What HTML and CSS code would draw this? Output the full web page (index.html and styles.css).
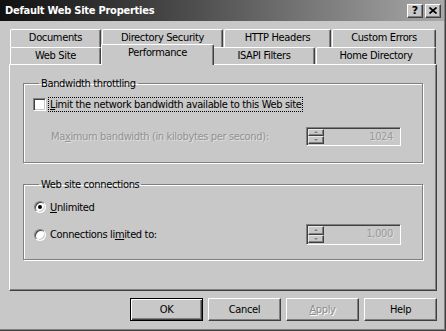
FILE: index.html
```html
<!DOCTYPE html>
<html>
<head>
<meta charset="utf-8">
<link rel="stylesheet" href="styles.css">
</head>
<body>
<div class="window">
  <div class="titlebar">
    <span class="title">Default Web Site Properties</span>
    <div class="tbtns">
      <span class="tbtn help">?</span>
      <span class="tbtn close"><svg width="8" height="7" viewBox="0 0 8 7"><path d="M0.5 0.5 L7.5 6.5 M7.5 0.5 L0.5 6.5" stroke="#000" stroke-width="1.7" fill="none"/></svg></span>
    </div>
  </div>
  <div class="main">
    <div class="tabs">
      <div class="tabrow back">
        <div class="tab t-doc">Documents</div>
        <div class="tab t-dir">Directory Security</div>
        <div class="tab t-http">HTTP Headers</div>
        <div class="tab t-err">Custom Errors</div>
      </div>
      <div class="tabrow front">
        <div class="tab t-web">Web Site</div>
        <div class="tab t-perf active">Performance</div>
        <div class="tab t-isapi">ISAPI Filters</div>
        <div class="tab t-home">Home Directory</div>
      </div>
    </div>
    <div class="panel">
      <fieldset class="group g1">
        <legend>Bandwidth throttling</legend>
        <div class="row check-row">
          <span class="check"></span>
          <span class="focus"><u>L</u>imit the network bandwidth available to this Web site</span>
        </div>
        <div class="row spin-row">
          <span class="dis label-max">Ma<u>x</u>imum bandwidth (in kilobytes per second):</span>
          <div class="spin">
            <div class="ud"><span class="udb"><i class="ar up"></i></span><span class="udb"><i class="ar down"></i></span></div>
            <span class="val">1024</span>
          </div>
        </div>
      </fieldset>
      <fieldset class="group g2">
        <legend>Web site connections</legend>
        <div class="row radio-row r1">
          <span class="radio on"></span>
          <span class="rlabel"><u>U</u>nlimited</span>
        </div>
        <div class="row radio-row r2">
          <span class="radio"></span>
          <span class="rlabel">Connections li<u>m</u>ited to:</span>
          <div class="spin tall">
            <div class="ud"><span class="udb"><i class="ar up"></i></span><span class="udb"><i class="ar down"></i></span></div>
            <span class="val">1,000</span>
          </div>
        </div>
      </fieldset>
    </div>
    <div class="buttons">
      <span class="btn default">OK</span>
      <span class="btn">Cancel</span>
      <span class="btn disabled"><u>A</u>pply</span>
      <span class="btn">Help</span>
    </div>
  </div>
</div>
</body>
</html>
```
FILE: styles.css
```css
* { box-sizing: border-box; }
html, body { margin: 0; padding: 0; }
body {
  background: #c8c8c8;
  font-family: "DejaVu Sans Condensed", "Liberation Sans", sans-serif;
  font-size: 11px;
  letter-spacing: -0.35px;
  color: #000;
  width: 446px;
  height: 331px;
  overflow: hidden;
}
u { text-decoration: underline; text-underline-offset: 1px; }

.window {
  width: 446px;
  height: 331px;
  background: #c8c8c8;
  border-right: 1px solid #404040;
  border-bottom: 1px solid #404040;
  box-shadow: inset -1px -1px 0 #808080;
  display: flex;
  flex-direction: column;
}

.titlebar {
  height: 21px;
  margin-right: 1px;
  background: linear-gradient(to right, #101010 0%, #505050 45%, #a8a8a8 100%);
  display: flex;
  align-items: center;
  padding: 0 3px 0 5px;
  color: #fff;
  font-weight: bold;
}
.title { font-size: 11px; letter-spacing: -0.25px; }
.tbtns { margin-left: auto; display: flex; gap: 2px; }
.tbtn {
  width: 16px;
  height: 14px;
  background: #c8c8c8;
  border: 1px solid;
  border-color: #fff #404040 #404040 #fff;
  box-shadow: inset -1px -1px 0 #808080;
  display: flex;
  align-items: center;
  justify-content: center;
  color: #000;
  font-family: "DejaVu Sans", sans-serif;
  font-weight: bold;
  font-size: 11px;
  line-height: 12px;
  letter-spacing: 0;
}

.main { padding: 8px 0 0 9px; width: 437px; }

.tabs { margin: 0 1px; width: 426px; }
.tabrow { display: flex; gap: 1px; }
.tabrow.back { height: 18px; }
.tabrow.front { height: 17px; }
.tab {
  background: #c8c8c8;
  border-top: 1px solid #fff;
  border-left: 1px solid #fff;
  border-right: 1px solid #404040;
  box-shadow: inset -1px 0 0 #808080;
  border-radius: 2px 2px 0 0;
  text-align: center;
  line-height: 16px;
  white-space: nowrap;
}
.back .tab { height: 18px; }
.front .tab { height: 17px; }
.t-doc { width: 91px; }
.t-dir { width: 121px; }
.t-http { width: 107px; }
.t-err { width: 104px; }
.t-web { width: 91px; }
.t-perf { width: 110px; }
.t-isapi { width: 102px; }
.t-home { width: 120px; }
.front .tab.active {
  position: relative;
  z-index: 1;
  height: 21px;
  margin: -3px -2px 0 -1px;
  width: 113px;
}

.panel {
  width: 428px;
  height: 227px;
  border-top: 1px solid #fff;
  border-left: 1px solid #fff;
  border-right: 1px solid #404040;
  border-bottom: 1px solid #404040;
  box-shadow: inset -1px -1px 0 #808080;
  padding: 12px 13px 0 13px;
}

.group {
  margin: 0;
  padding: 0 0 0 9px;
  border: 1px solid #808080;
  box-shadow: 1px 1px 0 #fff, inset 1px 1px 0 #fff;
  min-width: 0;
  width: 400px;
}
.group legend {
  margin-left: 6px;
  padding: 0 2px;
  line-height: 13px;
  height: 13px;
}
.g1 { height: 86px; }
.g2 { height: 82px; margin-top: 15px; }

.row { display: flex; align-items: center; }
.check-row { margin-top: 6px; height: 16px; }
.check {
  width: 13px;
  height: 13px;
  background: #fff;
  border: 1px solid;
  border-color: #808080 #fff #fff #808080;
  box-shadow: inset 1px 1px 0 #404040, inset -1px -1px 0 #c8c8c8;
  flex: none;
}
.focus {
  margin-left: 2px;
  border: 1px dotted #000;
  padding: 0 1px;
  line-height: 13px;
  white-space: nowrap;
}

.spin-row { margin-top: 14px; height: 20px; }
.dis { color: #929292; text-shadow: 1px 1px 0 rgba(255,255,255,0.45); }
.label-max { margin-left: 18px; white-space: nowrap; }

.spin {
  margin-left: auto;
  margin-right: 21px;
  width: 95px;
  height: 19px;
  border: 1px solid;
  border-color: #808080 #fff #fff #808080;
  box-shadow: inset 1px 1px 0 #404040, inset -1px -1px 0 #c8c8c8;
  padding: 1px;
  display: flex;
  flex: none;
}
.spin.tall { height: 21px; }
.ud { width: 16px; display: flex; flex-direction: column; }
.udb {
  flex: 1;
  border: 1px solid;
  border-color: #e8e8e8 #404040 #404040 #e8e8e8;
  box-shadow: inset -1px -1px 0 #808080;
  background: #c8c8c8;
  display: flex;
  align-items: center;
  justify-content: center;
}
.ar { display: block; width: 0; height: 0; border-left: 2px solid transparent; border-right: 2px solid transparent; }
.ar.up { border-bottom: 2px solid #808080; }
.ar.down { border-top: 2px solid #808080; }
.val {
  flex: 1;
  text-align: right;
  padding-right: 6px;
  line-height: 15px;
  color: #9a9a9a;
  text-shadow: 1px 1px 0 rgba(255,255,255,0.4);
}

.radio-row.r1 { margin-top: 8px; height: 16px; }
.radio-row.r2 { margin-top: 9px; height: 21px; }
.radio {
  margin-left: 1px;
  width: 12px;
  height: 12px;
  border-radius: 50%;
  background: #fff;
  border: 1px solid;
  border-color: #808080 #fff #fff #808080;
  box-shadow: inset 1px 1px 0 #404040, inset -1px -1px 0 #c8c8c8;
  display: flex;
  align-items: center;
  justify-content: center;
  flex: none;
}
.radio.on::after {
  content: "";
  width: 4px;
  height: 4px;
  border-radius: 50%;
  background: #000;
}
.rlabel { margin-left: 4px; white-space: nowrap; }

.buttons {
  width: 428px;
  margin-top: 7px;
  display: flex;
  justify-content: flex-end;
  gap: 5px;
}
.btn {
  width: 73px;
  height: 23px;
  border: 1px solid;
  border-color: #fff #404040 #404040 #fff;
  box-shadow: inset -1px -1px 0 #808080;
  display: flex;
  align-items: center;
  justify-content: center;
}
.btn.default {
  border: 1px solid #000;
  box-shadow: inset 1px 1px 0 #fff, inset -1px -1px 0 #404040, inset -2px -2px 0 #808080;
}
.btn.disabled { color: #8c8c8c; text-shadow: 1px 1px 0 #fff; }
```
